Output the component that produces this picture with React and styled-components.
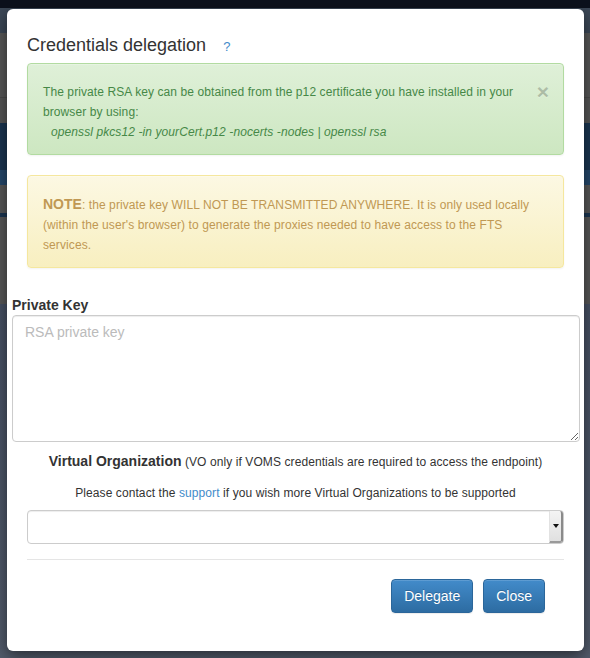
import styled, { createGlobalStyle } from "styled-components";

const Global = createGlobalStyle`
  html, body {
    margin: 0;
    padding: 0;
  }
  body {
    font-family: "Liberation Sans", Arial, sans-serif;
    color: #333;
  }
`;

// the dimmed page behind the modal
const Page = styled.div`
  position: relative;
  width: 590px;
  height: 658px;
  overflow: hidden;
  display: flex;
  flex-direction: column;
`;

const Band = styled.div`
  height: ${(p) => p.h}px;
  flex: ${(p) => (p.grow ? 1 : "none")};
  background: ${(p) => p.bg};
  border-bottom: ${(p) => (p.line ? "1px solid #4a4a4a" : "none")};
`;

const Modal = styled.div`
  position: absolute;
  left: 7px;
  top: 9px;
  width: 577px;
  height: 642px;
  box-sizing: border-box;
  background: #fff;
  border-radius: 6px;
  box-shadow: 0 5px 15px rgba(0, 0, 0, 0.5);
  display: flex;
  flex-direction: column;
  padding-top: 26px;
`;

const Header = styled.div`
  padding: 0 20px;
  display: flex;
  align-items: baseline;
`;

const Title = styled.h4`
  margin: 0;
  font-size: 18px;
  font-weight: 500;
  line-height: 20px;
  color: #333;
`;

const HelpLink = styled.a`
  margin-left: 17px;
  font-size: 13px;
  color: #428bca;
  text-decoration: none;
`;

const Body = styled.div`
  padding: 0 20px;
  margin-top: 8px;
`;

const Alert = styled.div`
  position: relative;
  box-sizing: border-box;
  border: 1px solid ${(p) => p.border};
  border-radius: 4px;
  background: linear-gradient(to bottom, ${(p) => p.from} 0, ${(p) => p.to} 100%);
  color: ${(p) => p.color};
  font-size: 12px;
  letter-spacing: 0.09px;
  line-height: 20px;
  padding: 18px ${(p) => (p.dismissable ? 35 : 15)}px 12px 15px;
  margin-bottom: ${(p) => p.mb}px;
  box-shadow: inset 0 1px 0 rgba(255, 255, 255, 0.25), 0 1px 2px rgba(0, 0, 0, 0.05);
`;

const CloseX = styled.span`
  position: absolute;
  right: 14px;
  top: 17px;
  font-size: 21px;
  font-weight: bold;
  line-height: 1;
  color: #000;
  opacity: 0.2;
  text-shadow: 0 1px 0 #fff;
`;

const Command = styled.div`
  font-style: italic;
  padding-left: 8px;
`;

const Note = styled.strong`
  font-size: 14px;
  letter-spacing: 0;
`;

const FormArea = styled.div`
  padding: 0 4px 0 5px;
  margin-top: 28px;
  display: flex;
  flex-direction: column;
`;

const Label = styled.label`
  font-size: 14px;
  font-weight: bold;
  line-height: 19px;
  color: #333;
`;

const KeyInput = styled.textarea`
  box-sizing: border-box;
  width: 100%;
  height: 127px;
  border: 1px solid #ccc;
  border-radius: 4px;
  padding: 6px 12px;
  font-family: "Liberation Sans", Arial, sans-serif;
  font-size: 14px;
  line-height: 20px;
  color: #555;
  box-shadow: inset 0 1px 1px rgba(0, 0, 0, 0.075);
  outline: none;
  margin: 0;
  &::placeholder {
    color: #bbb;
  }
`;

const Centered = styled.div`
  text-align: center;
  font-size: ${(p) => p.size}px;
  letter-spacing: 0.09px;
  line-height: ${(p) => p.lh}px;
  margin-top: ${(p) => p.mt}px;
  color: #333;
`;

const Strong = styled.strong`
  font-size: 14px;
  letter-spacing: 0;
`;

const Link = styled.a`
  color: #428bca;
  text-decoration: none;
`;

const SelectBox = styled.div`
  margin: 8px 20px 0;
  height: 34px;
  box-sizing: border-box;
  border: 1px solid #ccc;
  border-radius: 4px;
  background: #fff;
  display: flex;
  justify-content: flex-end;
  box-shadow: inset 0 1px 1px rgba(0, 0, 0, 0.075);
`;

const SelectArrow = styled.div`
  width: 11px;
  background: linear-gradient(to bottom, #f4f4f4, #e0e0e0);
  border-left: 1px solid #e2e2e2;
  border-right: 2px solid #8a8a8a;
  border-bottom: 2px solid #9a9a9a;
  border-radius: 0 3px 3px 0;
  display: flex;
  align-items: center;
  justify-content: center;
  &::after {
    content: "";
    border-left: 3px solid transparent;
    border-right: 3px solid transparent;
    border-top: 4px solid #111;
  }
`;

const Divider = styled.hr`
  margin: 15px 20px 0;
  border: 0;
  border-top: 1px solid #e5e5e5;
  height: 0;
`;

const Footer = styled.div`
  display: flex;
  justify-content: flex-end;
  gap: 10px;
  margin-top: 19px;
  padding: 0 39px 0 20px;
`;

const Button = styled.button`
  font-family: "Liberation Sans", Arial, sans-serif;
  font-size: 14px;
  line-height: 20px;
  padding: 6px 12px;
  color: #fff;
  border: 1px solid #2b669a;
  border-radius: 4px;
  background: linear-gradient(to bottom, #428bca 0, #2d6ca2 100%);
  text-shadow: 0 -1px 0 rgba(0, 0, 0, 0.2);
  box-shadow: inset 0 1px 0 rgba(255, 255, 255, 0.15), 0 1px 1px rgba(0, 0, 0, 0.075);
  cursor: pointer;
`;

function App() {
  return (
    <Page>
      <Global />
      <Band h={8} bg="#0c111c" />
      <Band h={25} bg="#3b4756" />
      <Band h={64} bg="#575757" line />
      <Band h={25} bg="#555" />
      <Band h={47} bg="#1b3550" />
      <Band h={15} bg="#24476a" />
      <Band h={28} bg="#575757" />
      <Band h={4} bg="#1b3550" />
      <Band h={87} bg="#575757" />
      <Band grow bg="linear-gradient(to bottom, #465063, #525b6b)" />

      <Modal>
        <Header>
          <Title>Credentials delegation</Title>
          <HelpLink href="#">?</HelpLink>
        </Header>

        <Body>
          <Alert dismissable border="#b2dba1" from="#dff0d8" to="#cde7c1" color="#468847" mb={20}>
            <CloseX>×</CloseX>
            The private RSA key can be obtained from the p12 certificate you have installed in your
            browser by using:
            <Command>openssl pkcs12 -in yourCert.p12 -nocerts -nodes | openssl rsa</Command>
          </Alert>
          <Alert border="#f5e79e" from="#fcf8e3" to="#f8efc0" color="#c09853" mb={0}>
            <Note>NOTE</Note>: the private key WILL NOT BE TRANSMITTED ANYWHERE. It is only used locally
            (within the user's browser) to generate the proxies needed to have access to the FTS
            services.
          </Alert>
        </Body>

        <FormArea>
          <Label>Private Key</Label>
          <KeyInput placeholder="RSA private key" />
        </FormArea>

        <Centered size={12} lh={20} mt={9}>
          <Strong>Virtual Organization</Strong> (VO only if VOMS credentials are required to access the endpoint)
        </Centered>
        <Centered size={12} lh={17} mt={13}>
          Please contact the <Link href="#">support</Link> if you wish more Virtual Organizations to be supported
        </Centered>

        <SelectBox>
          <SelectArrow />
        </SelectBox>

        <Divider />

        <Footer>
          <Button>Delegate</Button>
          <Button>Close</Button>
        </Footer>
      </Modal>
    </Page>
  );
}

export default App;
